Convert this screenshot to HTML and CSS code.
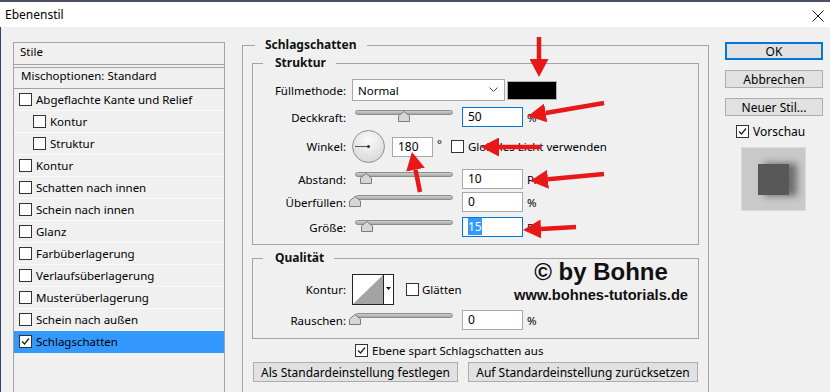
FILE: index.html
```html
<!DOCTYPE html>
<html lang="de">
<head>
<meta charset="utf-8">
<title>Ebenenstil</title>
<link rel="stylesheet" href="styles.css">
</head>
<body>
<div class="topstrip"></div>
<div class="titlebar">
  <span class="title">Ebenenstil</span>
  <svg class="close" width="12" height="12" viewBox="0 0 12 12"><path d="M0.5 0.5 L11.5 11.5 M11.5 0.5 L0.5 11.5" stroke="#111" stroke-width="1"/></svg>
</div>
<div class="dialog">
  <div class="styles-panel">
    <div class="sp-head">Stile</div>
    <div class="sp-blend">Mischoptionen: Standard</div>
    <div class="sp-row"><span class="cb"></span>Abgeflachte Kante und Relief</div>
    <div class="sp-row sub"><span class="cb"></span>Kontur</div>
    <div class="sp-row sub"><span class="cb"></span>Struktur</div>
    <div class="sp-row"><span class="cb"></span>Kontur</div>
    <div class="sp-row"><span class="cb"></span>Schatten nach innen</div>
    <div class="sp-row"><span class="cb"></span>Schein nach innen</div>
    <div class="sp-row"><span class="cb"></span>Glanz</div>
    <div class="sp-row"><span class="cb"></span>Farbüberlagerung</div>
    <div class="sp-row"><span class="cb"></span>Verlaufsüberlagerung</div>
    <div class="sp-row"><span class="cb"></span>Musterüberlagerung</div>
    <div class="sp-row"><span class="cb"></span>Schein nach außen</div>
    <div class="sp-row selected"><span class="cb"><svg viewBox="0 0 11 11" width="11" height="11"><path d="M2 5.5 L4.5 8 L9 2.5" fill="none" stroke="#222" stroke-width="1.3"/></svg></span>Schlagschatten</div>
  </div>

  <fieldset class="main-group">
    <legend>Schlagschatten</legend>

    <fieldset class="group struktur">
      <legend>Struktur</legend>
      <div class="row r1">
        <span class="lbl">Füllmethode:</span>
        <div class="select"><span>Normal</span><svg width="9" height="6" viewBox="0 0 9 6"><path d="M0.5 0.5 L4.5 4.5 L8.5 0.5" fill="none" stroke="#444" stroke-width="1"/></svg></div>
        <div class="swatch"></div>
      </div>
      <div class="row r2">
        <span class="lbl">Deckkraft:</span>
        <div class="slider"><div class="track"></div><svg class="thumb" style="left:49px" width="12" height="11" viewBox="0 0 12 11"><path d="M6 0.5 L11.5 5 L11.5 10.5 L0.5 10.5 L0.5 5 Z" fill="#d6d6d6" stroke="#7c7c7c"/></svg></div>
        <div class="num focus">50</div>
        <span class="unit">%</span>
      </div>
      <div class="row r3">
        <span class="lbl">Winkel:</span>
        <div class="dial"><div class="hand"></div><div class="dot"></div></div>
        <div class="num angle">180</div>
        <span class="deg">°</span>
        <span class="cb gl"></span>
        <span class="cb-text">Globales Licht verwenden</span>
      </div>
      <div class="row r4">
        <span class="lbl">Abstand:</span>
        <div class="slider"><div class="track"></div><svg class="thumb" style="left:11px" width="12" height="11" viewBox="0 0 12 11"><path d="M6 0.5 L11.5 5 L11.5 10.5 L0.5 10.5 L0.5 5 Z" fill="#d6d6d6" stroke="#7c7c7c"/></svg></div>
        <div class="num">10</div>
        <span class="unit">Px</span>
      </div>
      <div class="row r5">
        <span class="lbl">Überfüllen:</span>
        <div class="slider"><div class="track"></div><svg class="thumb" style="left:0px" width="12" height="11" viewBox="0 0 12 11"><path d="M6 0.5 L11.5 5 L11.5 10.5 L0.5 10.5 L0.5 5 Z" fill="#d6d6d6" stroke="#7c7c7c"/></svg></div>
        <div class="num">0</div>
        <span class="unit">%</span>
      </div>
      <div class="row r6">
        <span class="lbl">Größe:</span>
        <div class="slider"><div class="track"></div><svg class="thumb" style="left:12px" width="12" height="11" viewBox="0 0 12 11"><path d="M6 0.5 L11.5 5 L11.5 10.5 L0.5 10.5 L0.5 5 Z" fill="#d6d6d6" stroke="#7c7c7c"/></svg></div>
        <div class="num focus"><span class="sel">15</span></div>
        <span class="unit">Px</span>
      </div>
    </fieldset>

    <fieldset class="group quality">
      <legend>Qualität</legend>
      <div class="q-body">
        <div class="row q1">
          <span class="lbl">Kontur:</span>
          <div class="contour">
            <svg class="curve" width="30" height="29" viewBox="0 0 30 29"><path d="M0 29 L30 0 L30 29 Z" fill="#a3a3a3"/></svg>
            <div class="contour-arrow"><svg width="5" height="3" viewBox="0 0 5 3"><path d="M0 0 L5 0 L2.5 3 Z" fill="#111"/></svg></div>
          </div>
          <span class="cb glatt"></span>
          <span class="cb-text">Glätten</span>
        </div>
        <div class="row q2">
          <span class="lbl">Rauschen:</span>
          <div class="slider"><div class="track"></div><svg class="thumb" style="left:0px" width="12" height="11" viewBox="0 0 12 11"><path d="M6 0.5 L11.5 5 L11.5 10.5 L0.5 10.5 L0.5 5 Z" fill="#d6d6d6" stroke="#7c7c7c"/></svg></div>
          <div class="num">0</div>
          <span class="unit">%</span>
        </div>
        <div class="watermark">
          <div class="wm-big">© by Bohne</div>
          <div class="wm-url">www.bohnes-tutorials.de</div>
        </div>
      </div>
    </fieldset>

    <div class="knockout"><span class="cb"><svg viewBox="0 0 11 11" width="11" height="11"><path d="M2 5.5 L4.5 8 L9 2.5" fill="none" stroke="#222" stroke-width="1.3"/></svg></span><span class="cb-text">Ebene spart Schlagschatten aus</span></div>
    <div class="defaults">
      <div class="btn b-set">Als Standardeinstellung festlegen</div>
      <div class="btn b-reset">Auf Standardeinstellung zurücksetzen</div>
    </div>
  </fieldset>

  <div class="side">
    <div class="btn side-btn ok">OK</div>
    <div class="btn side-btn">Abbrechen</div>
    <div class="btn side-btn">Neuer Stil...</div>
    <div class="preview-check"><span class="cb"><svg viewBox="0 0 11 11" width="11" height="11"><path d="M2 5.5 L4.5 8 L9 2.5" fill="none" stroke="#222" stroke-width="1.3"/></svg></span><span class="cb-text">Vorschau</span></div>
    <div class="preview"><div class="preview-square"></div></div>
  </div>
</div>

<svg class="arrows" width="830" height="392" viewBox="0 0 830 392">
  <defs>
    <marker id="ah" markerUnits="userSpaceOnUse" markerWidth="18" markerHeight="19" refX="0" refY="9.5" orient="auto" viewBox="0 0 18 19">
      <path d="M0 0 L18 9.5 L0 19 Z" fill="#e81818"/>
    </marker>
  </defs>
  <g stroke="#e81818" stroke-width="4.5" marker-end="url(#ah)">
    <line x1="539" y1="37" x2="539" y2="59"/>
    <line x1="604" y1="103" x2="545.7" y2="113"/>
    <line x1="541" y1="147" x2="499" y2="147"/>
    <line x1="420" y1="192" x2="415.5" y2="169.7"/>
    <line x1="604" y1="174" x2="548" y2="179.3"/>
    <line x1="576" y1="227" x2="541" y2="229"/>
  </g>
</svg>
</body>
</html>
```

FILE: styles.css
```css
* { box-sizing: border-box; }
html, body { margin: 0; padding: 0; }
body {
  width: 830px;
  height: 392px;
  overflow: hidden;
  position: relative;
  background: #f0f0f0;
  font-family: "Noto Sans", "Open Sans", sans-serif;
  font-size: 11.5px;
  color: #000;
}

.topstrip { height: 2px; background: #4a5160; }

.titlebar {
  height: 25px;
  background: #fff;
  display: flex;
  align-items: center;
  justify-content: space-between;
  padding: 0 6px 0 5px;
}
.title { font-size: 12px; }
.close { margin-top: 2px; }

.dialog {
  display: flex;
  align-items: flex-start;
  padding-top: 10px;
  height: 365px;
  border-left: 1px solid #2d4463;
}

/* ---------- styles list ---------- */
.styles-panel {
  margin-left: 12px;
  margin-top: 5px;
  width: 212px;
  height: 360px;
  flex: none;
  border: 1px solid #a3a3a3;
  background: #f0f0f0;
}
.sp-head {
  height: 22px;
  line-height: 16px;
  padding: 1px 0 0 6px;
  border-bottom: 1px solid #a3a3a3;
}
.sp-blend {
  margin-top: 2px;
  height: 22px;
  line-height: 16px;
  padding: 0 0 0 7px;
  border-top: 1px solid #a3a3a3;
  border-bottom: 1px solid #a3a3a3;
}
.sp-row {
  height: 22px;
  display: flex;
  align-items: center;
  padding-left: 5px;
  border-bottom: 1px solid #fafafa;
}
.sp-row .cb { margin-right: 4px; }
.sp-row.sub { padding-left: 19px; }
.sp-row.selected { background: #3399ff; border-bottom-color: #3399ff; }

.cb {
  width: 13px;
  height: 13px;
  flex: none;
  border: 1px solid #333;
  background: #fff;
  display: inline-flex;
  align-items: center;
  justify-content: center;
}

/* ---------- main group ---------- */
fieldset { margin: 0; min-width: 0; }
legend {
  font-weight: bold;
  font-size: 12px;
  line-height: 16px;
  color: #111;
}
.main-group {
  flex: none;
  width: 467px;
  margin-left: 17px;
  padding: 0 9px 40px 9px;
  border: 1px solid #a3a3a3;
  border-bottom: none;
}
.main-group > legend { margin-left: 3px; padding: 0 10px; }

.group {
  border: 1px solid #a3a3a3;
  padding: 0;
}
.group > legend { margin-left: 10px; padding: 0 10px 0 12px; }

.struktur { margin-top: 2px; padding-top: 8px; padding-bottom: 7px; }

.row { display: flex; align-items: center; }
.lbl { width: 93px; flex: none; text-align: right; }

.r1 { height: 22px; }
.r2 { margin-top: 6px; height: 20px; }
.r3 { margin-top: 3px; height: 33px; }
.r4 { margin-top: 6px; height: 20px; }
.r5 { margin-top: 3px; height: 20px; }
.r6 { margin-top: 5px; height: 20px; }

.select {
  margin-left: 6px;
  width: 153px;
  height: 22px;
  background: #fff;
  border: 1px solid #a8a8a8;
  display: flex;
  align-items: center;
  justify-content: space-between;
  padding: 0 6px 0 5px;
}
.swatch {
  margin-left: 2px;
  width: 50px;
  height: 19px;
  background: #000;
  border: 1px solid #b0b0b0;
}

.slider {
  position: relative;
  margin-left: 3px;
  width: 110px;
  height: 12px;
  flex: none;
  align-self: flex-start;
  margin-top: 3px;
}
.track {
  margin: 0 6px;
  height: 5px;
  border: 1px solid #8c8c8c;
  border-radius: 3px;
  background: linear-gradient(#cfcfcf, #a8a8a8);
}
.thumb { position: absolute; top: 1px; }

.num {
  margin-left: 3px;
  width: 61px;
  height: 20px;
  flex: none;
  background: #fff;
  border: 1px solid #a8a8a8;
  padding-left: 5px;
  line-height: 18px;
  font-size: 12px;
}
.num.focus { border-color: #0078d7; }
.num.angle { margin-left: 7px; width: 41px; }
.sel { background: #3399ff; color: #fff; }
.unit { margin-left: 4px; }
.deg { margin-left: 4px; margin-top: -6px; }
.cb.gl { margin-left: 9px; }
.cb-text { margin-left: 4px; }

.dial {
  position: relative;
  margin-left: 6px;
  width: 33px;
  height: 33px;
  flex: none;
  border-radius: 50%;
  border: 1px solid #8e8e8e;
  background: radial-gradient(circle at 50% 30%, #fbfbfb, #dcdcdc 75%);
}
.hand {
  position: absolute;
  left: 2px;
  top: 15px;
  width: 14px;
  height: 1px;
  background: #555;
}
.dot {
  position: absolute;
  left: 14px;
  top: 14px;
  width: 3px;
  height: 3px;
  border-radius: 50%;
  background: #333;
}

/* ---------- quality ---------- */
.quality { margin-top: 5px; padding-bottom: 8px; }
.q-body { position: relative; }
.q1 { margin-top: 8px; height: 31px; }
.q2 { margin-top: 5px; height: 20px; }
.contour {
  margin-left: 6px;
  width: 42px;
  height: 31px;
  flex: none;
  display: flex;
  border: 1px solid #222;
  background: #fff;
}
.curve { display: block; }
.contour-arrow {
  width: 10px;
  border-left: 1px solid #222;
  display: flex;
  justify-content: center;
  padding-top: 12px;
}
.contour-arrow svg { display: block; }
.cb.glatt { margin-left: 12px; }
.quality .cb-text { margin-left: 3px; }

.watermark {
  position: absolute;
  left: 253px;
  top: -15px;
  width: 190px;
  text-align: center;
  font-family: "Liberation Sans", Arial, sans-serif;
  font-weight: bold;
  color: #111;
}
.wm-big { font-size: 24px; line-height: 26px; }
.wm-url { font-size: 14.7px; line-height: 20px; margin-top: 0; }

.knockout {
  margin-top: 3px;
  margin-left: 103px;
  height: 16px;
  display: flex;
  align-items: center;
}
.knockout .cb-text { margin-left: 4px; }

.defaults {
  margin-top: 4px;
  display: flex;
  gap: 10px;
  padding-left: 1px;
}
.btn {
  height: 20px;
  background: #e1e1e1;
  border: 1px solid #adadad;
  display: flex;
  align-items: center;
  justify-content: center;
  font-size: 12px;
  white-space: nowrap;
}
.b-set { width: 205px; }
.b-reset { width: 230px; }

/* ---------- side ---------- */
.side {
  margin-left: 16px;
  margin-top: 5px;
  width: 98px;
  flex: none;
}
.side-btn { height: 18px; margin-bottom: 10px; }
.side-btn.ok { border: 2px solid #0078d7; }
.preview-check {
  margin-top: -2px;
  margin-left: 11px;
  height: 14px;
  display: flex;
  align-items: center;
}
.preview-check .cb-text { margin-left: 4px; font-size: 12px; }
.preview {
  margin-top: 9px;
  margin-left: 16px;
  width: 65px;
  height: 64px;
  background: #c9c9c9;
  border: 1px solid #dadada;
  padding: 16px 0 0 16px;
}
.preview-square {
  width: 31px;
  height: 31px;
  background: #585858;
  box-shadow: 7px 0 7px 1px rgba(0, 0, 0, 0.45);
}

.arrows {
  position: absolute;
  left: 0;
  top: 0;
  pointer-events: none;
}
```
